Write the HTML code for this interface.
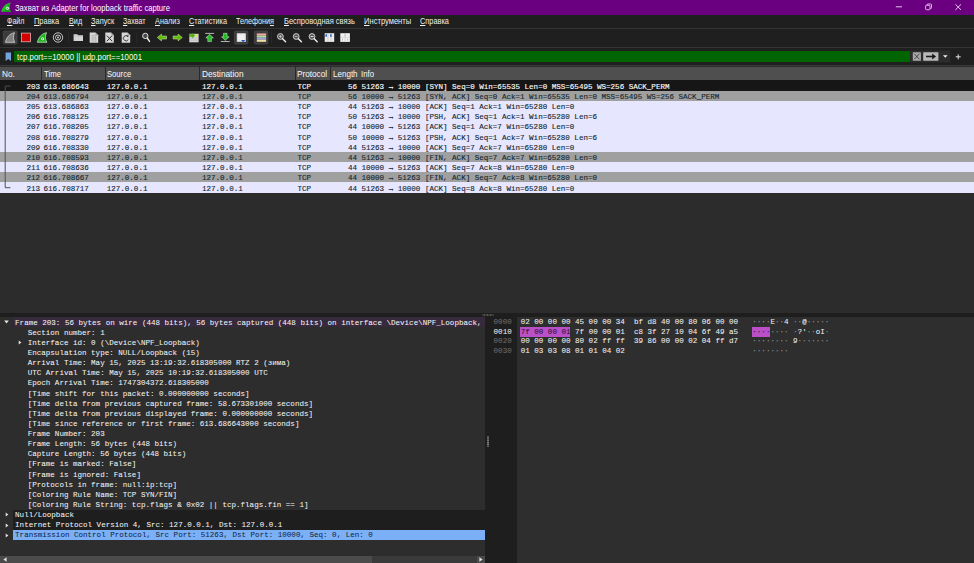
<!DOCTYPE html><html lang="ru"><head><meta charset="utf-8"><title>Wireshark</title><style>
html,body{margin:0;padding:0;}
body{width:974px;height:563px;overflow:hidden;background:#2c2c2c;position:relative;
 font-family:"Liberation Sans",sans-serif;color:#fff;}
.abs{position:absolute;}
.t{position:absolute;white-space:pre;line-height:1;}
#title{left:0;top:0;width:974px;height:15px;background:#6a0080;}
#menu{left:0;top:15px;width:974px;height:13px;background:#1f1f1f;}
#tool{left:0;top:28px;width:974px;height:19px;background:#1f1f1f;border-top:1px solid #343434;box-sizing:border-box;}
#filt{left:0;top:47px;width:974px;height:19px;background:#1f1f1f;border-top:1px solid #343434;box-sizing:border-box;}
#green{left:13.8px;top:50.6px;width:896.4px;height:11.7px;background:#006400;}
.menu{}
.menu u{text-decoration-thickness:0.6px;text-underline-offset:0.5px;}
#hdr{left:0;top:67px;width:974px;height:13px;background:#4f4f4f;}
.hsep{position:absolute;top:67px;width:1px;height:13px;background:#2a2a2a;}

.row{position:absolute;left:0;width:974px;height:11.2px;}
.m{font-family:"Liberation Mono",monospace;font-size:7.555px;position:absolute;white-space:pre;line-height:1;letter-spacing:0;-webkit-text-stroke:0.12px currentColor;}
.lo .m, .lo.m{-webkit-text-stroke:0.04px currentColor;}
</style></head><body>
<div class="abs" id="title"></div>
<svg class="abs" style="left:1px;top:2px" width="11" height="11" viewBox="0 0 11 11"><path d="M0.2 9.8C1.2 5.2 4.6 1.4 9.7 0.5C8.2 3.7 8.3 7.2 10 9.8Z" fill="#1fbf24"/><path d="M3.5 9.8C4 6.5 6 3.5 9 1.6C8 4.5 8.2 7.5 10 9.8Z" fill="#159a1a"/><circle cx="6.4" cy="6.3" r="1.7" fill="#b9ecb9"/><circle cx="6.4" cy="6.3" r="0.6" fill="#2aa52e"/></svg>
<div class="t" style="left:14.5px;top:3.8px;font-size:8.7px;color:#fff;transform-origin:0 0;transform:scaleX(0.8787);">Захват из Adapter for loopback traffic capture</div>
<svg class="abs" style="left:890px;top:0" width="84" height="15" viewBox="890 0 84 15"><path d="M895.8 6.8h6.2" stroke="#f1ddf4" stroke-width="0.9"/><rect x="925.6" y="5.3" width="4.4" height="4.4" rx="0.8" fill="none" stroke="#f1ddf4" stroke-width="0.8"/><path d="M927 5.3v-0.5a0.8 0.8 0 0 1 0.8-0.8h2.9a0.8 0.8 0 0 1 0.8 0.8v2.9a0.8 0.8 0 0 1-0.8 0.8h-0.6" fill="none" stroke="#f1ddf4" stroke-width="0.8"/><path d="M955.4 4.3l5.6 5.6M961 4.3l-5.6 5.6" stroke="#f1ddf4" stroke-width="0.9"/></svg>
<div class="abs" id="menu"></div>
<div class="t menu" style="left:6.8px;top:17.1px;font-size:8.7px;color:#f0f0f0;transform-origin:0 0;transform:scaleX(0.8146);"><u>Ф</u>айл</div>
<div class="t menu" style="left:33.9px;top:17.1px;font-size:8.7px;color:#f0f0f0;transform-origin:0 0;transform:scaleX(0.8583);"><u>П</u>равка</div>
<div class="t menu" style="left:68.5px;top:17.1px;font-size:8.7px;color:#f0f0f0;transform-origin:0 0;transform:scaleX(0.8334);"><u>В</u>ид</div>
<div class="t menu" style="left:90.8px;top:17.1px;font-size:8.7px;color:#f0f0f0;transform-origin:0 0;transform:scaleX(0.8570);"><u>З</u>апуск</div>
<div class="t menu" style="left:123.2px;top:17.1px;font-size:8.7px;color:#f0f0f0;transform-origin:0 0;transform:scaleX(0.8127);"><u>З</u>ахват</div>
<div class="t menu" style="left:154.9px;top:17.1px;font-size:8.7px;color:#f0f0f0;transform-origin:0 0;transform:scaleX(0.8452);"><u>А</u>нализ</div>
<div class="t menu" style="left:188.9px;top:17.1px;font-size:8.7px;color:#f0f0f0;transform-origin:0 0;transform:scaleX(0.8304);"><u>С</u>татистика</div>
<div class="t menu" style="left:236.4px;top:17.1px;font-size:8.7px;color:#f0f0f0;transform-origin:0 0;transform:scaleX(0.8310);">Телефони<u>я</u></div>
<div class="t menu" style="left:283.6px;top:17.1px;font-size:8.7px;color:#f0f0f0;transform-origin:0 0;transform:scaleX(0.8603);"><u>Б</u>еспроводная связь</div>
<div class="t menu" style="left:363.8px;top:17.1px;font-size:8.7px;color:#f0f0f0;transform-origin:0 0;transform:scaleX(0.8713);"><u>И</u>нструменты</div>
<div class="t menu" style="left:420.1px;top:17.1px;font-size:8.7px;color:#f0f0f0;transform-origin:0 0;transform:scaleX(0.8477);"><u>С</u>правка</div>
<div class="abs" id="tool"></div>
<svg class="abs" style="left:0;top:28px" width="974" height="20" viewBox="0 28 974 20">
<rect x="3.3" y="31" width="13.7" height="13.1" rx="1.3" fill="#3b3b3b" stroke="#505050" stroke-width="0.6"/>
<rect x="234.4" y="31" width="13.400000000000006" height="13.1" rx="1.3" fill="#3b3b3b" stroke="#505050" stroke-width="0.6"/>
<rect x="254.3" y="31" width="13.599999999999966" height="13.1" rx="1.3" fill="#3b3b3b" stroke="#505050" stroke-width="0.6"/>
<path d="M5.4 42.3C6.4 37.6 9.6 33.6 14.5 32.7C13 36 13.1 39.6 14.9 42.3Z" fill="#808080" stroke="#c6c6c6" stroke-width="0.9" stroke-linejoin="round"/>
<rect x="21.6" y="33.1" width="9" height="8.7" fill="#d40000" stroke="#e6c8c8" stroke-width="0.7"/>
<path d="M37.4 42.3C38.4 37.6 41.6 33.6 46.5 32.7C45 36 45.1 39.6 46.9 42.3Z" fill="#1fb51f" stroke="#d6f0d6" stroke-width="0.7" stroke-linejoin="round"/>
<circle cx="42.6" cy="38.8" r="1.5" fill="#dff5df"/><circle cx="42.6" cy="38.8" r="0.6" fill="#1fa01f"/>
<circle cx="58" cy="37.5" r="4.7" fill="none" stroke="#d8d8d8" stroke-width="0.9"/><circle cx="58" cy="37.5" r="2.5" fill="none" stroke="#d8d8d8" stroke-width="0.9"/><circle cx="58" cy="37.5" r="0.9" fill="#d8d8d8"/>
<rect x="68" y="31.5" width="0.7" height="12" fill="#2e2e2e"/>
<rect x="136.5" y="31.5" width="0.7" height="12" fill="#2e2e2e"/>
<rect x="271" y="31.5" width="0.7" height="12" fill="#2e2e2e"/>
<path d="M73.6 34.3h3.6l0.8 1h5v5.6h-9.4z" fill="#d4d4d4"/><path d="M73.6 36.2h9.4" stroke="#b4b4b4" stroke-width="0.5"/>
<path d="M89.7 32.6h5.8l2.7 2.6v7.5h-8.5z" fill="#d8d8d8"/><path d="M95.5 32.6v2.6h2.7" fill="#a8a8a8"/>
<path d="M91 35.3h6M91 37.2h6M91 39.1h6M91 41h6M92.9 35v6.5M95.3 35v6.5" stroke="#a5a5a5" stroke-width="0.5" fill="none"/>
<path d="M105.3 32.6h5.8l2.7 2.6v7.5h-8.5z" fill="#d8d8d8"/><path d="M111.1 32.6v2.6h2.7" fill="#a8a8a8"/>
<path d="M106.9 35.6l5.2 5.6M112.1 35.6l-5.2 5.6" stroke="#2b2b2b" stroke-width="1" fill="none"/>
<path d="M121.7 32.6h5.8l2.7 2.6v7.5h-8.5z" fill="#d8d8d8"/><path d="M127.5 32.6v2.6h2.7" fill="#a8a8a8"/>
<path d="M127.9 36.5a2.6 2.6 0 1 0 0.4 3" stroke="#2b2b2b" stroke-width="0.9" fill="none"/><path d="M126.5 35.2l2 0.2l-0.3 2z" fill="#2b2b2b"/>
<circle cx="145.3" cy="35.9" r="2.7" fill="#4a4a4a" stroke="#dcdcdc" stroke-width="1"/><path d="M147.2 38l2.3 3.4" stroke="#f0f0f0" stroke-width="1.4" stroke-linecap="round"/>
<path d="M157.3 37.5l4.2-3.4v1.9h5v3h-5v1.9z" fill="#5cb800" stroke="#d9ecc0" stroke-width="0.5" stroke-linejoin="round"/>
<path d="M182.3 37.5l-4.2-3.4v1.9h-5v3h5v1.9z" fill="#5cb800" stroke="#d9ecc0" stroke-width="0.5" stroke-linejoin="round"/>
<rect x="189.3" y="33.8" width="9.3" height="8.5" fill="#d6d6d6"/><path d="M189.3 38.2h9.3M189.3 40.2h9.3" stroke="#a8a8a8" stroke-width="0.5"/>
<rect x="196" y="34.6" width="2" height="2" fill="#e8e030"/>
<path d="M195 35.6l-2.6-2.4v1.4h-3.3v2h3.3v1.4z" fill="#4fb400" stroke="#3a8a00" stroke-width="0.3"/>
<path d="M205.2 33.4h8.8" stroke="#d8d8d8" stroke-width="0.8"/>
<path d="M209.6 34.3l3.8 3.6h-2v3.7h-3.6v-3.7h-2z" fill="#27b827" stroke="#def5de" stroke-width="0.5" stroke-linejoin="round"/>
<path d="M220.9 41.5h8.8" stroke="#d8d8d8" stroke-width="0.8"/>
<path d="M225.3 40.4l3.8-3.6h-2v-3.5h-3.6v3.5h-2z" fill="#27b827" stroke="#def5de" stroke-width="0.5" stroke-linejoin="round"/>
<rect x="236.8" y="33.3" width="9" height="8.5" fill="#f0f0f0"/><rect x="237.5" y="34" width="7.6" height="7.1" fill="none" stroke="#c8c8c8" stroke-width="0.4"/>
<path d="M240.9 39.9h4.6l-2.3 2.3z" fill="#1f5fc4"/>
<rect x="256.8" y="33.4" width="9.3" height="2.1" fill="#f2a3a3"/><rect x="256.8" y="35.5" width="9.3" height="2.1" fill="#b4e09a"/><rect x="256.8" y="37.6" width="9.3" height="2.1" fill="#a3a3e8"/><rect x="256.8" y="39.7" width="9.3" height="2.1" fill="#efe0a0"/>
<circle cx="280.4" cy="36.5" r="2.9" fill="#555" stroke="#dcdcdc" stroke-width="0.9"/>
<path d="M282.59999999999997 38.8l3 3" stroke="#f0f0f0" stroke-width="1.4" stroke-linecap="round"/>
<path d="M278.9 36.5h3M280.4 35v3" stroke="#e8e8e8" stroke-width="0.6"/>
<circle cx="296.2" cy="36.5" r="2.9" fill="#555" stroke="#dcdcdc" stroke-width="0.9"/>
<path d="M298.4 38.8l3 3" stroke="#f0f0f0" stroke-width="1.4" stroke-linecap="round"/>
<path d="M294.7 36.5h3" stroke="#e8e8e8" stroke-width="0.6"/>
<circle cx="312.0" cy="36.5" r="2.9" fill="#555" stroke="#dcdcdc" stroke-width="0.9"/>
<path d="M314.2 38.8l3 3" stroke="#f0f0f0" stroke-width="1.4" stroke-linecap="round"/>
<path d="M310.5 36.5h3" stroke="#e8e8e8" stroke-width="0.9"/>
<rect x="324.7" y="33.2" width="9.5" height="8.7" fill="#ececec"/><path d="M327.9 33.2v8.7M331 33.2v8.7" stroke="#b0b0b0" stroke-width="0.5"/>
<rect x="325.5" y="34.2" width="1.4" height="2.6" fill="#1f5fc4"/><rect x="330.2" y="34.2" width="1.4" height="2.6" fill="#1f5fc4"/>
<rect x="340.3" y="33.2" width="9.6" height="8.7" fill="#f2f2f2"/><path d="M340.3 37.2h9.6M345.1 33.2v8.7" stroke="#b8b8b8" stroke-width="0.5"/>
<path d="M345.1 34.3v1.8M342.5 38.6v2M347.6 38.6v2" stroke="#9a9a9a" stroke-width="0.6"/>
</svg>
<div class="abs" id="filt"></div>
<div class="abs" id="green"></div>
<svg class="abs" style="left:4px;top:51px" width="8" height="11" viewBox="0 0 8 11"><path d="M1.6 1.6h5.4v8.3l-2.7-2l-2.7 2z" fill="#75a3dc"/></svg>
<div class="t" style="left:16.5px;top:52.5px;font-size:8.7px;color:#fff;transform-origin:0 0;transform:scaleX(0.9005);">tcp.port==10000 || udp.port==10001</div>
<svg class="abs" style="left:900px;top:48px" width="74" height="18" viewBox="900 48 74 18">
<path d="M910.2 50.6h38.6a1.5 1.5 0 0 1 1.5 1.5v8.8a1.5 1.5 0 0 1-1.5 1.5h-38.6z" fill="#2c2c2c"/>
<rect x="912.8" y="52.2" width="8.1" height="8.6" rx="0.6" fill="#a9a9a9"/><path d="M914.3 53.8l5.1 5.4M919.4 53.8l-5.1 5.4" stroke="#2a2a2a" stroke-width="0.8"/>
<rect x="923.2" y="52.2" width="15.2" height="8.6" rx="0.6" fill="#b9b9b9"/><path d="M926 56.5h8" stroke="#1c1c1c" stroke-width="1.6"/><path d="M932.2 53.6l3.9 2.9l-3.9 2.9z" fill="#1c1c1c"/>
<path d="M943 55.3h4.6l-2.3 2.5z" fill="#f0f0f0"/>
<path d="M955.7 56.8h5M958.2 54.3v5" stroke="#f4f4f4" stroke-width="0.9"/>
</svg>
<div class="abs" style="left:0;top:65px;width:974px;height:1px;background:#383838"></div>
<div class="abs" id="hdr"></div>
<div class="hsep" style="left:40.6px"></div>
<div class="hsep" style="left:104.6px"></div>
<div class="hsep" style="left:199.4px"></div>
<div class="hsep" style="left:294.7px"></div>
<div class="hsep" style="left:330.3px"></div>
<div class="t" style="left:2.0px;top:70.2px;font-size:8.7px;color:#fafafa;transform-origin:0 0;transform:scaleX(0.9460);">No.</div>
<div class="t" style="left:43.5px;top:70.2px;font-size:8.7px;color:#fafafa;transform-origin:0 0;transform:scaleX(0.9007);">Time</div>
<div class="t" style="left:106.8px;top:70.2px;font-size:8.7px;color:#fafafa;transform-origin:0 0;transform:scaleX(0.8790);">Source</div>
<div class="t" style="left:202px;top:70.2px;font-size:8.7px;color:#fafafa;transform-origin:0 0;transform:scaleX(0.9547);">Destination</div>
<div class="t" style="left:297.2px;top:70.2px;font-size:8.7px;color:#fafafa;transform-origin:0 0;transform:scaleX(0.9443);">Protocol</div>
<div class="t" style="left:333.2px;top:70.2px;font-size:8.7px;color:#fafafa;transform-origin:0 0;transform:scaleX(0.9256);">Length</div>
<div class="t" style="left:360.8px;top:70.2px;font-size:8.7px;color:#fafafa;transform-origin:0 0;transform:scaleX(0.8966);">Info</div>
<div class="row" style="top:80.30px;background:#161616;color:#ffffff">
<span class="m" style="left:26.5px;top:3.3px">203</span>
<span class="m" style="left:43.5px;top:3.3px">613.686643</span>
<span class="m" style="left:106.7px;top:3.3px">127.0.0.1</span>
<span class="m" style="left:202px;top:3.3px">127.0.0.1</span>
<span class="m" style="left:297.5px;top:3.3px">TCP</span>
<span class="m" style="left:348px;top:3.3px">56</span>
<span class="m" style="left:361.5px;top:3.3px">51263 → 10000 [SYN] Seq=0 Win=65535 Len=0 MSS=65495 WS=256 SACK_PERM</span>
</div>
<div class="row" style="top:90.50px;background:#a0a0a0;color:#12272e">
<span class="m" style="left:26.5px;top:3.3px">204</span>
<span class="m" style="left:43.5px;top:3.3px">613.686794</span>
<span class="m" style="left:106.7px;top:3.3px">127.0.0.1</span>
<span class="m" style="left:202px;top:3.3px">127.0.0.1</span>
<span class="m" style="left:297.5px;top:3.3px">TCP</span>
<span class="m" style="left:348px;top:3.3px">56</span>
<span class="m" style="left:361.5px;top:3.3px">10000 → 51263 [SYN, ACK] Seq=0 Ack=1 Win=65535 Len=0 MSS=65495 WS=256 SACK_PERM</span>
</div>
<div class="row" style="top:100.70px;background:#e7e6ff;color:#12272e">
<span class="m" style="left:26.5px;top:3.3px">205</span>
<span class="m" style="left:43.5px;top:3.3px">613.686863</span>
<span class="m" style="left:106.7px;top:3.3px">127.0.0.1</span>
<span class="m" style="left:202px;top:3.3px">127.0.0.1</span>
<span class="m" style="left:297.5px;top:3.3px">TCP</span>
<span class="m" style="left:348px;top:3.3px">44</span>
<span class="m" style="left:361.5px;top:3.3px">51263 → 10000 [ACK] Seq=1 Ack=1 Win=65280 Len=0</span>
</div>
<div class="row" style="top:110.90px;background:#e7e6ff;color:#12272e">
<span class="m" style="left:26.5px;top:3.3px">206</span>
<span class="m" style="left:43.5px;top:3.3px">616.708125</span>
<span class="m" style="left:106.7px;top:3.3px">127.0.0.1</span>
<span class="m" style="left:202px;top:3.3px">127.0.0.1</span>
<span class="m" style="left:297.5px;top:3.3px">TCP</span>
<span class="m" style="left:348px;top:3.3px">50</span>
<span class="m" style="left:361.5px;top:3.3px">51263 → 10000 [PSH, ACK] Seq=1 Ack=1 Win=65280 Len=6</span>
</div>
<div class="row" style="top:121.10px;background:#e7e6ff;color:#12272e">
<span class="m" style="left:26.5px;top:3.3px">207</span>
<span class="m" style="left:43.5px;top:3.3px">616.708205</span>
<span class="m" style="left:106.7px;top:3.3px">127.0.0.1</span>
<span class="m" style="left:202px;top:3.3px">127.0.0.1</span>
<span class="m" style="left:297.5px;top:3.3px">TCP</span>
<span class="m" style="left:348px;top:3.3px">44</span>
<span class="m" style="left:361.5px;top:3.3px">10000 → 51263 [ACK] Seq=1 Ack=7 Win=65280 Len=0</span>
</div>
<div class="row" style="top:131.30px;background:#e7e6ff;color:#12272e">
<span class="m" style="left:26.5px;top:3.3px">208</span>
<span class="m" style="left:43.5px;top:3.3px">616.708279</span>
<span class="m" style="left:106.7px;top:3.3px">127.0.0.1</span>
<span class="m" style="left:202px;top:3.3px">127.0.0.1</span>
<span class="m" style="left:297.5px;top:3.3px">TCP</span>
<span class="m" style="left:348px;top:3.3px">50</span>
<span class="m" style="left:361.5px;top:3.3px">10000 → 51263 [PSH, ACK] Seq=1 Ack=7 Win=65280 Len=6</span>
</div>
<div class="row" style="top:141.50px;background:#e7e6ff;color:#12272e">
<span class="m" style="left:26.5px;top:3.3px">209</span>
<span class="m" style="left:43.5px;top:3.3px">616.708330</span>
<span class="m" style="left:106.7px;top:3.3px">127.0.0.1</span>
<span class="m" style="left:202px;top:3.3px">127.0.0.1</span>
<span class="m" style="left:297.5px;top:3.3px">TCP</span>
<span class="m" style="left:348px;top:3.3px">44</span>
<span class="m" style="left:361.5px;top:3.3px">51263 → 10000 [ACK] Seq=7 Ack=7 Win=65280 Len=0</span>
</div>
<div class="row" style="top:151.70px;background:#a0a0a0;color:#12272e">
<span class="m" style="left:26.5px;top:3.3px">210</span>
<span class="m" style="left:43.5px;top:3.3px">616.708593</span>
<span class="m" style="left:106.7px;top:3.3px">127.0.0.1</span>
<span class="m" style="left:202px;top:3.3px">127.0.0.1</span>
<span class="m" style="left:297.5px;top:3.3px">TCP</span>
<span class="m" style="left:348px;top:3.3px">44</span>
<span class="m" style="left:361.5px;top:3.3px">51263 → 10000 [FIN, ACK] Seq=7 Ack=7 Win=65280 Len=0</span>
</div>
<div class="row" style="top:161.90px;background:#e7e6ff;color:#12272e">
<span class="m" style="left:26.5px;top:3.3px">211</span>
<span class="m" style="left:43.5px;top:3.3px">616.708636</span>
<span class="m" style="left:106.7px;top:3.3px">127.0.0.1</span>
<span class="m" style="left:202px;top:3.3px">127.0.0.1</span>
<span class="m" style="left:297.5px;top:3.3px">TCP</span>
<span class="m" style="left:348px;top:3.3px">44</span>
<span class="m" style="left:361.5px;top:3.3px">10000 → 51263 [ACK] Seq=7 Ack=8 Win=65280 Len=0</span>
</div>
<div class="row" style="top:172.10px;background:#a0a0a0;color:#12272e">
<span class="m" style="left:26.5px;top:3.3px">212</span>
<span class="m" style="left:43.5px;top:3.3px">616.708667</span>
<span class="m" style="left:106.7px;top:3.3px">127.0.0.1</span>
<span class="m" style="left:202px;top:3.3px">127.0.0.1</span>
<span class="m" style="left:297.5px;top:3.3px">TCP</span>
<span class="m" style="left:348px;top:3.3px">44</span>
<span class="m" style="left:361.5px;top:3.3px">10000 → 51263 [FIN, ACK] Seq=7 Ack=8 Win=65280 Len=0</span>
</div>
<div class="row" style="top:182.30px;background:#e7e6ff;color:#12272e;height:10.6px">
<span class="m" style="left:26.5px;top:3.3px">213</span>
<span class="m" style="left:43.5px;top:3.3px">616.708717</span>
<span class="m" style="left:106.7px;top:3.3px">127.0.0.1</span>
<span class="m" style="left:202px;top:3.3px">127.0.0.1</span>
<span class="m" style="left:297.5px;top:3.3px">TCP</span>
<span class="m" style="left:348px;top:3.3px">44</span>
<span class="m" style="left:361.5px;top:3.3px">51263 → 10000 [ACK] Seq=8 Ack=8 Win=65280 Len=0</span>
</div>
<svg class="abs" style="left:4px;top:80px" width="10" height="113" viewBox="0 0 10 113"><path d="M6.6 6.1H1.2V107.7H6.4" fill="none" stroke="#505050" stroke-width="1"/></svg>
<div class="abs" style="left:0;top:313px;width:974px;height:3.6px;background:#1e1e1e"></div>
<svg class="abs" style="left:482px;top:313.6px" width="12" height="2" viewBox="0 0 12 2"><path d="M0.5 1h11" stroke="#9a9a9a" stroke-width="0.9" stroke-dasharray="1 0.5"/></svg>
<div class="abs" style="left:0;top:316.6px;width:485px;height:237.4px;background:#2d2d2d"></div>
<div class="abs" style="left:485px;top:316.6px;width:31.6px;height:246.4px;background:#1e1e1e"></div>
<div class="abs" style="left:516.6px;top:316.6px;width:457.4px;height:246.4px;background:#2e2e2e"></div>
<div class="abs" style="left:13.8px;top:317.00px;width:471.2px;height:9.72px;background:#372a3d"></div>
<svg class="abs" style="left:4.0px;top:320.30px" width="5" height="4" viewBox="0 0 5 4"><path d="M0.2 0.5h4.6L2.5 3.6z" fill="#e8e8e8"/></svg>
<div class="m lo" style="left:15.1px;top:319.70px;color:#f4f4f4">Frame 203: 56 bytes on wire (448 bits), 56 bytes captured (448 bits) on interface \Device\NPF_Loopback,</div>
<div class="m lo" style="left:27.7px;top:329.82px;color:#f4f4f4">Section number: 1</div>
<svg class="abs" style="left:17.8px;top:340.44px" width="4" height="5" viewBox="0 0 4 5"><path d="M0.7 0.4v4.2L3.4 2.5z" fill="#e0e0e0"/></svg>
<div class="m lo" style="left:27.7px;top:339.94px;color:#f4f4f4">Interface id: 0 (\Device\NPF_Loopback)</div>
<div class="m lo" style="left:27.7px;top:350.06px;color:#f4f4f4">Encapsulation type: NULL/Loopback (15)</div>
<div class="m lo" style="left:27.7px;top:360.18px;color:#f4f4f4">Arrival Time: May 15, 2025 13:19:32.618305000 RTZ 2 (зима)</div>
<div class="m lo" style="left:27.7px;top:370.30px;color:#f4f4f4">UTC Arrival Time: May 15, 2025 10:19:32.618305000 UTC</div>
<div class="m lo" style="left:27.7px;top:380.42px;color:#f4f4f4">Epoch Arrival Time: 1747304372.618305000</div>
<div class="m lo" style="left:27.7px;top:390.54px;color:#f4f4f4">[Time shift for this packet: 0.000000000 seconds]</div>
<div class="m lo" style="left:27.7px;top:400.66px;color:#f4f4f4">[Time delta from previous captured frame: 58.673301000 seconds]</div>
<div class="m lo" style="left:27.7px;top:410.78px;color:#f4f4f4">[Time delta from previous displayed frame: 0.000000000 seconds]</div>
<div class="m lo" style="left:27.7px;top:420.90px;color:#f4f4f4">[Time since reference or first frame: 613.686643000 seconds]</div>
<div class="m lo" style="left:27.7px;top:431.02px;color:#f4f4f4">Frame Number: 203</div>
<div class="m lo" style="left:27.7px;top:441.14px;color:#f4f4f4">Frame Length: 56 bytes (448 bits)</div>
<div class="m lo" style="left:27.7px;top:451.26px;color:#f4f4f4">Capture Length: 56 bytes (448 bits)</div>
<div class="m lo" style="left:27.7px;top:461.38px;color:#f4f4f4">[Frame is marked: False]</div>
<div class="m lo" style="left:27.7px;top:471.50px;color:#f4f4f4">[Frame is ignored: False]</div>
<div class="m lo" style="left:27.7px;top:481.62px;color:#f4f4f4">[Protocols in frame: null:ip:tcp]</div>
<div class="m lo" style="left:27.7px;top:491.74px;color:#f4f4f4">[Coloring Rule Name: TCP SYN/FIN]</div>
<div class="m lo" style="left:27.7px;top:501.86px;color:#f4f4f4">[Coloring Rule String: tcp.flags &amp; 0x02 || tcp.flags.fin == 1]</div>
<div class="abs" style="left:13px;top:509.68px;width:472px;height:10.12px;background:#1e1e1e"></div>
<svg class="abs" style="left:5.2px;top:512.48px" width="4" height="5" viewBox="0 0 4 5"><path d="M0.7 0.4v4.2L3.4 2.5z" fill="#e0e0e0"/></svg>
<div class="m lo" style="left:15.1px;top:511.98px;color:#f4f4f4">Null/Loopback</div>
<div class="abs" style="left:13px;top:519.80px;width:472px;height:10.12px;background:#1e1e1e"></div>
<svg class="abs" style="left:5.2px;top:522.60px" width="4" height="5" viewBox="0 0 4 5"><path d="M0.7 0.4v4.2L3.4 2.5z" fill="#e0e0e0"/></svg>
<div class="m lo" style="left:15.1px;top:522.10px;color:#f4f4f4">Internet Protocol Version 4, Src: 127.0.0.1, Dst: 127.0.0.1</div>
<div class="abs" style="left:13px;top:529.92px;width:472px;height:10.12px;background:#7bb0f6"></div>
<svg class="abs" style="left:5.2px;top:532.72px" width="4" height="5" viewBox="0 0 4 5"><path d="M0.7 0.4v4.2L3.4 2.5z" fill="#e0e0e0"/></svg>
<div class="m lo" style="left:15.1px;top:532.22px;color:#13243a">Transmission Control Protocol, Src Port: 51263, Dst Port: 10000, Seq: 0, Len: 0</div>
<div class="abs" style="left:0;top:556px;width:485px;height:7.5px;background:#3a3a3a"></div>
<div class="abs" style="left:10px;top:556px;width:362px;height:7.5px;background:#4b4b4b"></div>
<div class="abs" style="left:0;top:556px;width:9.5px;height:7.5px;background:#4a4a4a"></div>
<div class="abs" style="left:477px;top:556px;width:8px;height:7.5px;background:#4a4a4a"></div>
<svg class="abs" style="left:2.5px;top:557px" width="4" height="5" viewBox="0 0 4 5"><path d="M3.6 0.2v4.6L0.4 2.5z" fill="#e0e0e0"/></svg>
<svg class="abs" style="left:479px;top:557px" width="4" height="5" viewBox="0 0 4 5"><path d="M0.4 0.2v4.6L3.6 2.5z" fill="#e0e0e0"/></svg>
<svg class="abs" style="left:487px;top:436px" width="2" height="11" viewBox="0 0 2 11"><path d="M1 0.2v10.8" stroke="#8a8a8a" stroke-width="1.6" stroke-dasharray="1.4 0.45"/></svg>
<div class="abs" style="left:520px;top:327.07px;width:50.3px;height:9.87px;background:#b950c8"></div>
<div class="abs" style="left:752px;top:327.07px;width:18.4px;height:9.87px;background:#b950c8"></div>
<div class="m lo" style="left:493.6px;top:319.40px;color:#6e6e6e">0000</div>
<div class="m lo" style="left:520.7px;top:319.40px;color:#f4f4f4">02 00 00 00 45 00 00 34  bf d8 40 00 80 06 00 00</div>
<div class="m lo" style="left:752.3px;top:319.40px;color:#9a9a9a">····<span style="color:#f0f0f0">E</span>··<span style="color:#f0f0f0">4</span> ··<span style="color:#f0f0f0">@</span>·····</div>
<div class="m lo" style="left:493.6px;top:328.87px;color:#f0f0f0">0010</div>
<div class="m lo" style="left:520.7px;top:328.87px;color:#f4f4f4"><span style="color:#2a1030">7f 00 00 01</span> 7f 00 00 01  c8 3f 27 10 04 6f 49 a5</div>
<div class="m lo" style="left:752.3px;top:328.87px;color:#9a9a9a"><span style="color:#2a1030">····</span>···· ·<span style="color:#f0f0f0">?'</span>··<span style="color:#f0f0f0">oI</span>·</div>
<div class="m lo" style="left:493.6px;top:338.34px;color:#6e6e6e">0020</div>
<div class="m lo" style="left:520.7px;top:338.34px;color:#f4f4f4">00 00 00 00 80 02 ff ff  39 86 00 00 02 04 ff d7</div>
<div class="m lo" style="left:752.3px;top:338.34px;color:#9a9a9a">········ <span style="color:#f0f0f0">9</span>·······</div>
<div class="m lo" style="left:493.6px;top:347.81px;color:#6e6e6e">0030</div>
<div class="m lo" style="left:520.7px;top:347.81px;color:#f4f4f4">01 03 03 08 01 01 04 02</div>
<div class="m lo" style="left:752.3px;top:347.81px;color:#9a9a9a">········</div>
</body></html>
